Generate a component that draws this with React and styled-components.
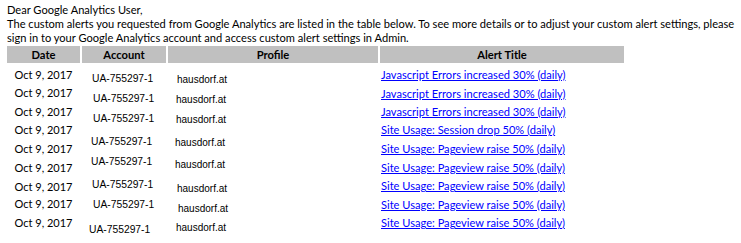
import React from "react";
import styled, { createGlobalStyle } from "styled-components";

const Global = createGlobalStyle`
  html, body { margin: 0; padding: 0; background: #ffffff; }
  body { font-family: Lato, "Noto Sans", sans-serif; color: #000; }
`;

const Page = styled.div`
  padding: 3px 0 0 7px;
  width: 741px;
  height: 243px;
  box-sizing: border-box;
  overflow: hidden;
`;

const Line = styled.div`
  font-size: 11.1px;
  line-height: 14px;
  white-space: nowrap;
`;

const HeaderRow = styled.div`
  display: grid;
  grid-template-columns: 73px 84px 210px 244px;
  column-gap: 2px;
  margin-top: 1px;
`;

const HeadCell = styled.div`
  background: #c0c0c0;
  height: 17px;
  font-size: 11.2px;
  font-weight: 700;
  line-height: 17px;
  text-align: center;
`;

const Body = styled.div`
  display: grid;
  grid-template-columns: 73px 84px 210px 244px;
  column-gap: 2px;
`;

const Column = styled.div`
  display: flex;
  flex-direction: column;
  align-items: ${(p) => (p.$center ? "center" : "flex-start")};
`;

const DateText = styled.div`
  font-size: 11px;
  line-height: 14px;
  height: 14px;
  margin-top: ${(p) => p.$gap}px;
  white-space: nowrap;
`;

const AccountText = styled.div`
  font-family: "Liberation Sans", Arial, sans-serif;
  font-size: 10.3px;
  line-height: 12px;
  height: 12px;
  margin-top: ${(p) => p.$gap}px;
  padding-left: ${(p) => p.$indent}px;
  white-space: nowrap;
`;

const ProfileText = styled(AccountText)`
  font-size: 10px;
`;

const AlertLink = styled.a`
  display: block;
  font-size: 11.1px;
  line-height: 14px;
  height: 14px;
  margin-top: ${(p) => p.$gap}px;
  padding-left: 1px;
  color: #0000ff;
  text-decoration: underline;
  white-space: nowrap;
`;

const BODY_TOP = 63;

function gaps(tops, lh) {
  return tops.map((t, i) => (i === 0 ? t - BODY_TOP : t - (tops[i - 1] + lh)));
}

const dateTops = [68, 86, 105, 123, 142, 161, 180, 197, 216];
const alertTops = [67.5, 86.5, 104.5, 123, 142, 160.5, 179, 197.5, 216];
const accountTops = [73, 93, 113, 136, 156, 179, 199, 224];
const accountIndent = [10, 11, 11, 9, 9, 10, 11, 7];
const profileTops = [74, 94, 114, 137, 159, 183, 203, 222];
const profileIndent = [9, 8, 8, 7, 7, 9, 10, 8];

const alerts = [
  "Javascript Errors increased 30% (daily)",
  "Javascript Errors increased 30% (daily)",
  "Javascript Errors increased 30% (daily)",
  "Site Usage: Session drop 50% (daily)",
  "Site Usage: Pageview raise 50% (daily)",
  "Site Usage: Pageview raise 50% (daily)",
  "Site Usage: Pageview raise 50% (daily)",
  "Site Usage: Pageview raise 50% (daily)",
  "Site Usage: Pageview raise 50% (daily)",
];

export default function App() {
  const dg = gaps(dateTops, 14);
  const ag = gaps(alertTops, 14);
  const accg = gaps(accountTops, 12);
  const pg = gaps(profileTops, 12);
  return (
    <Page>
      <Global />
      <Line>Dear Google Analytics User,</Line>
      <Line>
        The custom alerts you requested from Google Analytics are listed in the table below. To see more details or to adjust your custom alert settings, please
      </Line>
      <Line>sign in to your Google Analytics account and access custom alert settings in Admin.</Line>
      <HeaderRow>
        <HeadCell>Date</HeadCell>
        <HeadCell>Account</HeadCell>
        <HeadCell>Profile</HeadCell>
        <HeadCell>Alert Title</HeadCell>
      </HeaderRow>
      <Body>
        <Column $center>
          {dg.map((g, i) => (
            <DateText key={i} $gap={g}>Oct 9, 2017</DateText>
          ))}
        </Column>
        <Column>
          {accg.map((g, i) => (
            <AccountText key={i} $gap={g} $indent={accountIndent[i]}>UA-755297-1</AccountText>
          ))}
        </Column>
        <Column>
          {pg.map((g, i) => (
            <ProfileText key={i} $gap={g} $indent={profileIndent[i]}>hausdorf.at</ProfileText>
          ))}
        </Column>
        <Column>
          {ag.map((g, i) => (
            <AlertLink key={i} href="#" $gap={g}>{alerts[i]}</AlertLink>
          ))}
        </Column>
      </Body>
    </Page>
  );
}
